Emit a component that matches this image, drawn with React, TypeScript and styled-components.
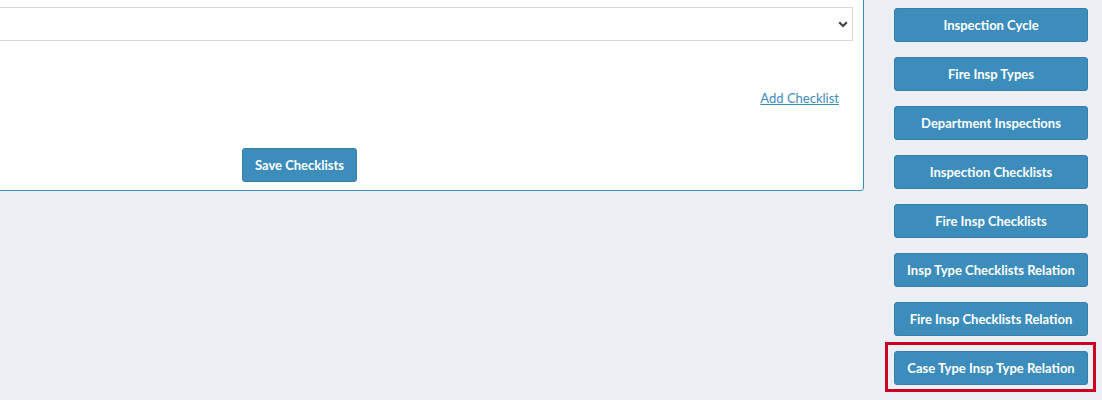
import React from "react";
import styled, { createGlobalStyle } from "styled-components";

const Global = createGlobalStyle`
  html, body { margin: 0; padding: 0; background: #ecf0f5; }
  body { font-family: Lato, "Noto Sans", sans-serif; overflow: hidden; }
`;

const Page = styled.div`
  display: flex;
  align-items: flex-start;
  width: 1102px;
  height: 400px;
  overflow: hidden;
  background: #ecf0f5;
`;

const Main = styled.div`
  flex: none;
  width: 1129px;
  margin-left: -265px;
`;

const Card = styled.div`
  margin-top: -40px;
  background: #fff;
  border: 1px solid #3c8dbc;
  border-radius: 3px;
  padding: 46px 10px 8px 10px;
  display: flex;
  flex-direction: column;
`;

const SelectWrap = styled.div`
  position: relative;
  height: 34px;
`;

const Select = styled.select`
  appearance: none;
  -webkit-appearance: none;
  box-sizing: border-box;
  width: 100%;
  height: 34px;
  border: 1px solid #d2d6de;
  border-radius: 0;
  background: #fff;
  font-family: inherit;
  font-size: 13px;
  outline: none;
`;

const Chevron = styled.svg`
  position: absolute;
  right: 5px;
  top: 14px;
  pointer-events: none;
`;

const LinkRow = styled.div`
  display: flex;
  justify-content: flex-end;
  padding-right: 14px;
  margin-top: 47px;
  height: 20px;
`;

const Link = styled.a`
  color: #3c8dbc;
  font-size: 13px;
  line-height: 20px;
  text-decoration: underline;
  cursor: pointer;
`;

const Footer = styled.div`
  display: flex;
  justify-content: center;
  margin-top: 40px;
`;

const Button = styled.button<{ $wide?: boolean }>`
  box-sizing: border-box;
  height: 34px;
  padding: 0 12px;
  width: ${(p) => (p.$wide ? "194px" : "auto")};
  background: #3c8dbc;
  border: 1px solid #367fa9;
  border-radius: 3px;
  color: #fff;
  font-family: inherit;
  font-size: 13px;
  font-weight: 700;
  white-space: nowrap;
  cursor: pointer;
`;

const Highlight = styled.div`
  display: flex;
  flex-direction: column;
  margin: -9px -8px 0 -9px;
  padding: 6px 5px 4px 6px;
  border: 3px solid #cc0022;
`;

const Side = styled.div`
  flex: none;
  display: flex;
  flex-direction: column;
  gap: 15px;
  margin-left: 30px;
  padding-top: 8px;
`;

const items = [
  "Inspection Cycle",
  "Fire Insp Types",
  "Department Inspections",
  "Inspection Checklists",
  "Fire Insp Checklists",
  "Insp Type Checklists Relation",
  "Fire Insp Checklists Relation",
];

export default function App() {
  return (
    <>
      <Global />
      <Page>
        <Main>
          <Card>
            <SelectWrap>
              <Select defaultValue="">
                <option value=""></option>
              </Select>
              <Chevron width="10" height="7" viewBox="0 0 10 7">
                <path d="M1.2 1.2 L5 5 L8.8 1.2" fill="none" stroke="#444" strokeWidth="2.2" />
              </Chevron>
            </SelectWrap>
            <LinkRow>
              <Link>Add Checklist</Link>
            </LinkRow>
            <Footer>
              <Button>Save Checklists</Button>
            </Footer>
          </Card>
        </Main>
        <Side>
          {items.map((t) => (
            <Button key={t} $wide>
              {t}
            </Button>
          ))}
          <Highlight>
            <Button $wide>Case Type Insp Type Relation</Button>
          </Highlight>
        </Side>
      </Page>
    </>
  );
}
